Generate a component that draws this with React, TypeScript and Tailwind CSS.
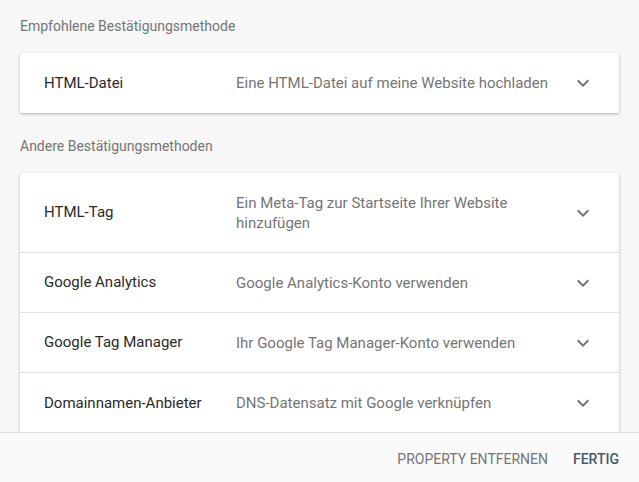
const others = [
  { title: 'HTML-Tag', desc: 'Ein Meta-Tag zur Startseite Ihrer Website hinzufügen', tall: true },
  { title: 'Google Analytics', desc: 'Google Analytics-Konto verwenden' },
  { title: 'Google Tag Manager', desc: 'Ihr Google Tag Manager-Konto verwenden' },
  { title: 'Domainnamen-Anbieter', desc: 'DNS-Datensatz mit Google verknüpfen' },
]

function ExpandMore() {
  return (
    <svg viewBox="0 0 24 24" className="w-6 h-6 shrink-0 fill-[#757575]">
      <path d="M16.59 8.59L12 13.17 7.41 8.59 6 10l6 6 6-6z" />
    </svg>
  )
}

function Row({ title, desc, tall }: { title: string; desc: string; tall?: boolean }) {
  return (
    <div className={`flex items-center pl-6 pr-6 ${tall ? 'h-[80px]' : 'h-[60px]'}`}>
      <div className="w-[192px] shrink-0 text-[15px] text-[#2a2a2a]">{title}</div>
      <div className="flex-1 pr-3 text-[15px] leading-[20px] text-[#757575]">{desc}</div>
      <ExpandMore />
    </div>
  )
}

export default function App() {
  return (
    <div className="relative h-[482px] w-[639px] overflow-hidden bg-[#f7f7f7] font-['Roboto',sans-serif]">
      <div className="px-5 pt-[16px]">
        <div className="text-[14px] leading-[20px] text-[#757575]">Empfohlene Bestätigungsmethode</div>
        <div className="mt-[17px] bg-white rounded-[2px] shadow-[0_1px_3px_rgba(0,0,0,0.3)]">
          <Row title="HTML-Datei" desc="Eine HTML-Datei auf meine Website hochladen" />
        </div>
        <div className="mt-[23px] text-[14px] leading-[20px] text-[#757575]">Andere Bestätigungsmethoden</div>
        <div className="mt-[17px] bg-white rounded-[2px] shadow-[0_1px_3px_rgba(0,0,0,0.3)] divide-y divide-[#e0e0e0]">
          {others.map((o) => (
            <Row key={o.title} {...o} />
          ))}
        </div>
      </div>
      <div className="absolute bottom-0 left-0 right-0 h-[50px] flex items-center justify-end gap-[25px] pr-5 pt-[3px] bg-[#fafafa] border-t border-[#e0e0e0]">
        <button className="text-[14px] text-[#757575] uppercase">Property entfernen</button>
        <button className="text-[14px] font-medium text-[#455a64] uppercase">Fertig</button>
      </div>
    </div>
  )
}
